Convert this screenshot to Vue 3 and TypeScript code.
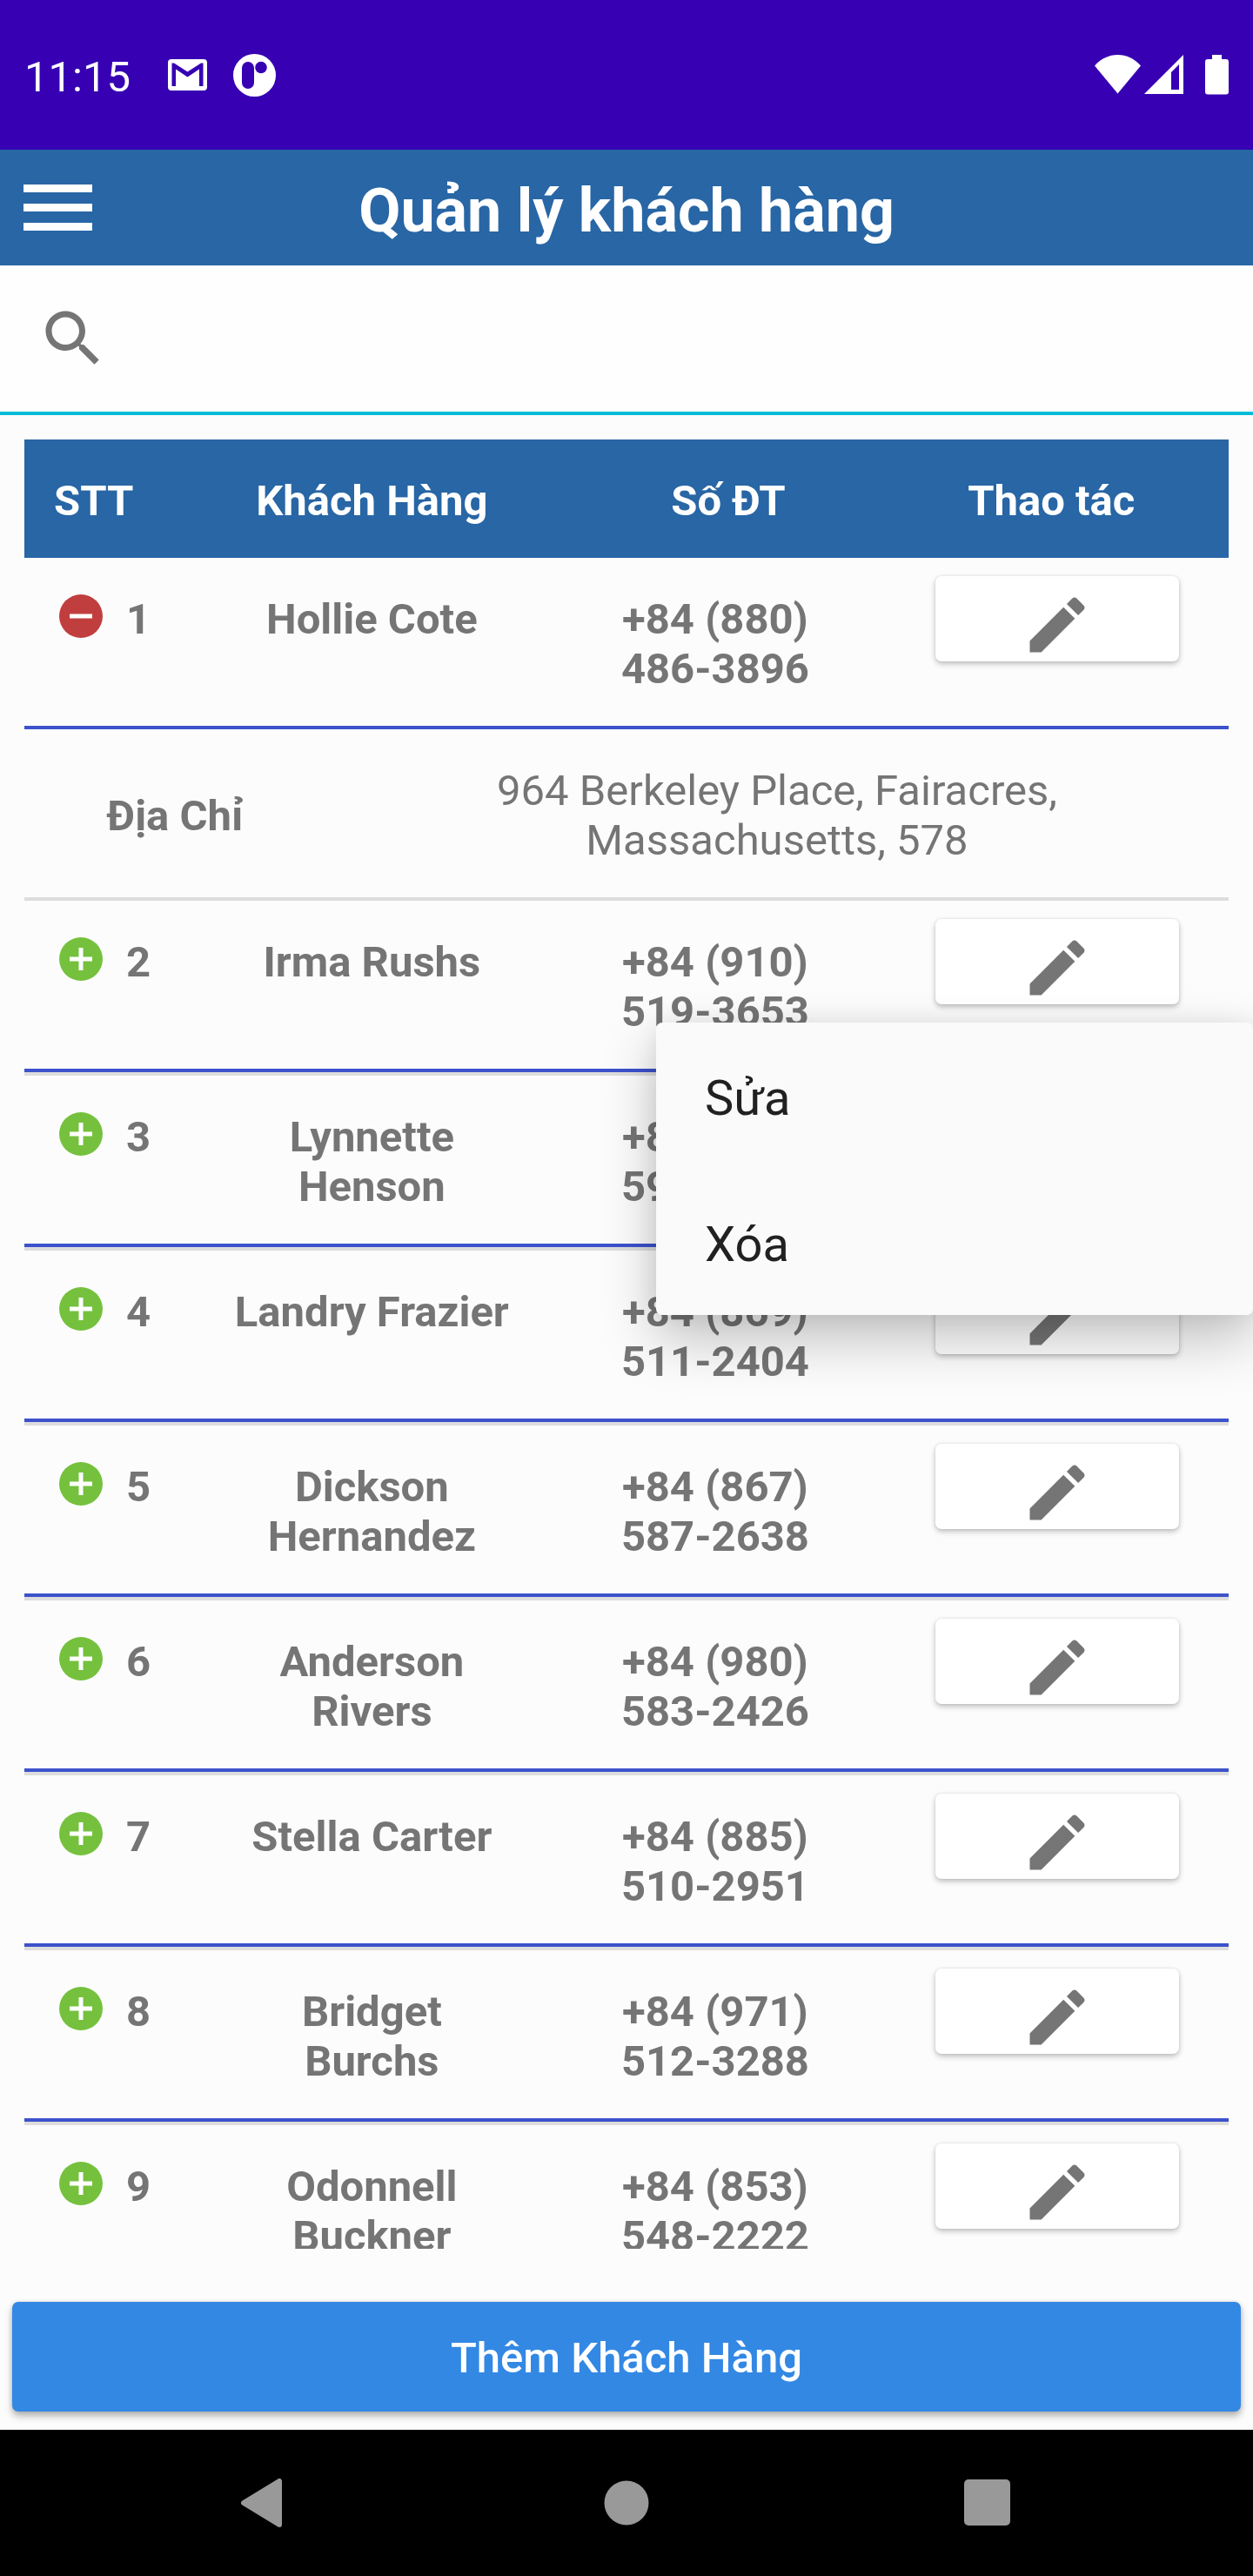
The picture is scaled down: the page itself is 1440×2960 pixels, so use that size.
<script setup lang="ts">
import { ref } from 'vue'

interface Customer {
  id: number
  name: string
  phone: string
  address: string
}

const customers: Customer[] = [
  { id: 1, name: 'Hollie Cote', phone: '+84 (880) 486-3896', address: '964 Berkeley Place, Fairacres, Massachusetts, 578' },
  { id: 2, name: 'Irma Rushs', phone: '+84 (910) 519-3653', address: '' },
  { id: 3, name: 'Lynnette Henson', phone: '+84 (869) 594-2571', address: '' },
  { id: 4, name: 'Landry Frazier', phone: '+84 (869) 511-2404', address: '' },
  { id: 5, name: 'Dickson Hernandez', phone: '+84 (867) 587-2638', address: '' },
  { id: 6, name: 'Anderson Rivers', phone: '+84 (980) 583-2426', address: '' },
  { id: 7, name: 'Stella Carter', phone: '+84 (885) 510-2951', address: '' },
  { id: 8, name: 'Bridget Burchs', phone: '+84 (971) 512-3288', address: '' },
  { id: 9, name: 'Odonnell Buckner', phone: '+84 (853) 548-2222', address: '' },
]

const expandedId = ref<number | null>(1)
const menuId = ref<number | null>(2)
const query = ref('')

function toggleDetail(id: number) {
  expandedId.value = expandedId.value === id ? null : id
}

function toggleMenu(id: number) {
  menuId.value = menuId.value === id ? null : id
}
</script>

<template>
  <div class="screen">
    <div class="status-bar">
      <div class="status-left">
        <span class="clock">11:15</span>
        <svg class="icon-mail" viewBox="0 0 45 36" aria-hidden="true">
          <rect width="45" height="36" rx="4" fill="#fff" />
          <path d="M4.5 4.5H7L22.5 14.5L38 4.5H40.5V31H36V11.5L22.5 20.5L9 11.5V31H4.5Z" fill="#3700b3" />
        </svg>
        <svg class="icon-app" viewBox="0 0 49 49" aria-hidden="true">
          <circle cx="24.5" cy="24.5" r="24.5" fill="#fff" />
          <rect x="10" y="9" width="14" height="31" rx="7" fill="#3700b3" />
          <circle cx="32" cy="15.5" r="6.8" fill="#3700b3" />
        </svg>
      </div>
      <div class="status-right">
        <svg class="icon-wifi" viewBox="0 0 54 46" aria-hidden="true">
          <path d="M0 12.5C7 4.5 16.5 0 26.5 0S46 4.5 53 12.5L26.5 44.5Z" fill="#fff" />
        </svg>
        <svg class="icon-signal" viewBox="0 0 46 46" aria-hidden="true">
          <path d="M0 45L45 0V45ZM31 20V40H40V11Z" fill="#fff" fill-rule="evenodd" />
        </svg>
        <svg class="icon-battery" viewBox="0 0 27 46" aria-hidden="true">
          <path d="M8 0H19V5H24Q27 5 27 8V42.5Q27 45.5 24 45.5H3Q0 45.5 0 42.5V8Q0 5 3 5H8Z" fill="#fff" />
        </svg>
      </div>
    </div>

    <header class="app-bar">
      <button class="menu-button" type="button" aria-label="Menu">
        <span class="bar"></span>
        <span class="bar"></span>
        <span class="bar"></span>
      </button>
      <h1>Quản lý khách hàng</h1>
    </header>

    <label class="search">
      <svg viewBox="0 0 24 24" aria-hidden="true">
        <path d="M15.5 14h-.79l-.28-.27C15.41 12.59 16 11.11 16 9.5 16 5.91 13.09 3 9.5 3S3 5.91 3 9.5 5.91 16 9.5 16c1.61 0 3.09-.59 4.23-1.57l.27.28v.79l5 4.99L20.49 19l-4.99-5zm-6 0C7.01 14 5 11.99 5 9.5S7.01 5 9.5 5 14 7.01 14 9.5 11.99 14 9.5 14z" fill="#757575" />
      </svg>
      <input v-model="query" type="search" aria-label="Tìm kiếm" />
    </label>

    <main class="list">
      <table>
        <colgroup>
          <col class="col-index" />
          <col class="col-name" />
          <col class="col-phone" />
          <col class="col-action" />
        </colgroup>
        <thead>
          <tr>
            <th class="index" scope="col">STT</th>
            <th class="name" scope="col">Khách Hàng</th>
            <th class="phone" scope="col">Số ĐT</th>
            <th class="action" scope="col">Thao tác</th>
          </tr>
        </thead>
        <tbody>
          <template v-for="c in customers" :key="c.id">
            <tr class="row" :class="{ expanded: expandedId === c.id }">
              <td class="index">
                <div class="index-box">
                  <button
                    class="toggle"
                    type="button"
                    :aria-label="'Chi tiết ' + c.name"
                    :aria-expanded="expandedId === c.id"
                    @click="toggleDetail(c.id)"
                  >
                    <svg viewBox="0 0 50 50" aria-hidden="true">
                      <circle cx="25" cy="25" r="25" :fill="expandedId === c.id ? '#c13e3e' : '#75c13e'" />
                      <path :d="expandedId === c.id ? 'M12 25H38' : 'M12 25H38M25 12V38'" stroke="#fff" stroke-width="5" />
                    </svg>
                  </button>
                  <span>{{ c.id }}</span>
                </div>
              </td>
              <td class="name">{{ c.name }}</td>
              <td class="phone">{{ c.phone }}</td>
              <td class="action">
                <button class="edit" type="button" :aria-label="'Thao tác ' + c.name" @click="toggleMenu(c.id)">
                  <svg viewBox="0 0 24 24" aria-hidden="true">
                    <path d="M3 17.25V21h3.75L17.81 9.94l-3.75-3.75L3 17.25zM20.71 7.04c.39-.39.39-1.02 0-1.41l-2.34-2.34c-.39-.39-1.02-.39-1.41 0l-1.83 1.83 3.75 3.75 1.83-1.83z" fill="#757575" />
                  </svg>
                </button>
                <div v-if="menuId === c.id" class="popup" role="menu">
                  <button type="button" role="menuitem">Sửa</button>
                  <button type="button" role="menuitem">Xóa</button>
                </div>
              </td>
            </tr>
            <tr v-if="expandedId === c.id" class="detail">
              <td colspan="4">
                <dl>
                  <dt>Địa Chỉ</dt>
                  <dd>{{ c.address }}</dd>
                </dl>
              </td>
            </tr>
          </template>
        </tbody>
      </table>
    </main>

    <footer class="footer">
      <button class="add" type="button">Thêm Khách Hàng</button>
    </footer>

    <nav class="system-nav">
      <button type="button" aria-label="Quay lại">
        <svg viewBox="0 0 56 56" aria-hidden="true">
          <path d="M44 3V53L3 28Z" fill="#999" stroke="#999" stroke-width="6" stroke-linejoin="round" />
        </svg>
      </button>
      <button type="button" aria-label="Trang chủ">
        <svg viewBox="0 0 56 56" aria-hidden="true"><circle cx="28" cy="28" r="25.5" fill="#999" /></svg>
      </button>
      <button type="button" aria-label="Gần đây">
        <svg viewBox="0 0 56 56" aria-hidden="true"><rect x="1" y="1" width="53" height="53" rx="5" fill="#999" /></svg>
      </button>
    </nav>
  </div>
</template>

<style>
body {
  margin: 0;
  background: #fcfcfc;
}
</style>

<style scoped>
.screen {
  display: flex;
  flex-direction: column;
  height: 100vh;
  background: #fcfcfc;
  color: #757575;
  font-family: Roboto, "Noto Sans", sans-serif;
  font-size: 49px;
  line-height: 57px;
}

button {
  margin: 0;
  padding: 0;
  border: 0;
  background: none;
  color: inherit;
  font: inherit;
  cursor: pointer;
}

svg {
  display: block;
}

.status-bar {
  display: flex;
  flex: none;
  align-items: center;
  justify-content: space-between;
  box-sizing: border-box;
  height: 172px;
  padding: 0 28px;
  background: #3700b3;
  color: #fff;
}

.status-left,
.status-right {
  display: flex;
  align-items: center;
}

.clock {
  padding-top: 4px;
}

.icon-mail {
  width: 45px;
  height: 36px;
  margin-left: 43px;
}

.icon-app {
  width: 49px;
  height: 49px;
  margin-left: 30px;
}

.icon-wifi {
  width: 54px;
  height: 46px;
}

.icon-signal {
  width: 46px;
  height: 46px;
  margin-left: 3px;
}

.icon-battery {
  width: 27px;
  height: 46px;
  margin-left: 24px;
}

.app-bar {
  display: grid;
  flex: none;
  grid-template-columns: 80px 1fr 80px;
  align-items: center;
  height: 133px;
  padding: 0 27px;
  background: #2866a5;
  color: #fff;
}

.menu-button {
  display: flex;
  flex-direction: column;
  gap: 13px;
}

.bar {
  width: 79px;
  height: 9px;
  background: #fff;
}

h1 {
  margin: 0;
  padding-top: 7px;
  font-size: 70px;
  line-height: 82px;
  font-weight: 700;
  text-align: center;
}

.search {
  display: flex;
  flex: none;
  align-items: center;
  height: 168px;
  padding: 0 42px;
  border-bottom: 4px solid #00bcd7;
  background: #fefefe;
}

.search svg {
  flex: none;
  width: 84px;
  height: 84px;
}

.search input {
  flex: 1;
  min-width: 0;
  height: 100%;
  margin-left: 28px;
  padding: 0;
  border: 0;
  outline: 0;
  background: none;
  color: inherit;
  font: inherit;
}

.list {
  flex: 1;
  min-height: 0;
  margin-top: 28px;
  padding: 0 28px;
  overflow: hidden auto;
  scrollbar-width: none;
}

table {
  width: 100%;
  table-layout: fixed;
  border-spacing: 0;
  text-align: center;
}

.col-index {
  width: 17%;
}

.col-name {
  width: 24%;
}

.col-phone {
  width: 31%;
}

.col-action {
  width: 28%;
}

th {
  padding: 42px 0 37px;
  background: #2866a5;
  color: #fff;
  font-weight: 700;
}

th.index {
  padding-left: 34px;
  text-align: left;
}

th.phone {
  padding-left: 54px;
}

th.action {
  padding-right: 20px;
}

th.name,
td.name {
  padding-left: 4px;
  padding-right: 8px;
}

.row td {
  padding-top: 42px;
  padding-bottom: 41px;
  border-bottom: 4px solid #ddd;
  box-shadow: inset 0 -4px #3c52cc;
  font-weight: 700;
  vertical-align: top;
}

.row.expanded td {
  border-bottom: 0;
}

td.index {
  padding-left: 40px;
}

.index-box {
  display: flex;
  align-items: flex-start;
  gap: 27px;
}

.toggle {
  width: 50px;
  height: 50px;
}

/* Narrow enough for the number to break after the area code */
td.phone {
  padding-left: 84px;
  padding-right: 60px;
}

.row td.action {
  position: relative;
  padding: 21px 6px 0 0;
}

.edit {
  display: flex;
  align-items: flex-end;
  justify-content: center;
  width: 280px;
  height: 98px;
  margin: 0 auto;
  border-radius: 7px;
  background: #fff;
  box-shadow: 0 3px 6px rgba(0, 0, 0, 0.24), 0 0 3px rgba(0, 0, 0, 0.1);
}

.edit svg {
  width: 84px;
  height: 84px;
}

.popup {
  position: absolute;
  z-index: 2;
  top: 140px;
  right: -28px;
  display: flex;
  flex-direction: column;
  width: 686px;
  border-radius: 7px;
  background: #fafafa;
  box-shadow: 0 28px 64px rgba(0, 0, 0, 0.24), 0 0 28px rgba(0, 0, 0, 0.08);
}

.popup button {
  height: 168px;
  padding: 5px 56px 0;
  color: #212121;
  font-size: 56px;
  line-height: 66px;
  font-weight: 400;
  text-align: left;
}

.detail td {
  padding: 42px 0 37px;
  border-bottom: 4px solid #ddd;
}

dl {
  display: grid;
  grid-template-columns: 1fr 3fr;
  align-items: center;
  margin: 0;
}

dt {
  font-weight: 700;
}

dd {
  margin: 0;
  padding: 0 140px;
}

.footer {
  flex: none;
  padding: 61px 14px 21px;
}

.add {
  display: block;
  width: 100%;
  height: 126px;
  padding-top: 2px;
  border-radius: 7px;
  background: #3388e4;
  box-shadow: 0 5px 8px rgba(0, 0, 0, 0.3), 0 0 4px rgba(0, 0, 0, 0.1);
  color: #fff;
  font-weight: 500;
}

.system-nav {
  display: flex;
  flex: none;
  height: 168px;
  padding: 0 97px;
  background: #000;
}

.system-nav button {
  display: flex;
  flex: 1;
  align-items: center;
  justify-content: center;
}

.system-nav svg {
  width: 56px;
  height: 56px;
}
</style>
